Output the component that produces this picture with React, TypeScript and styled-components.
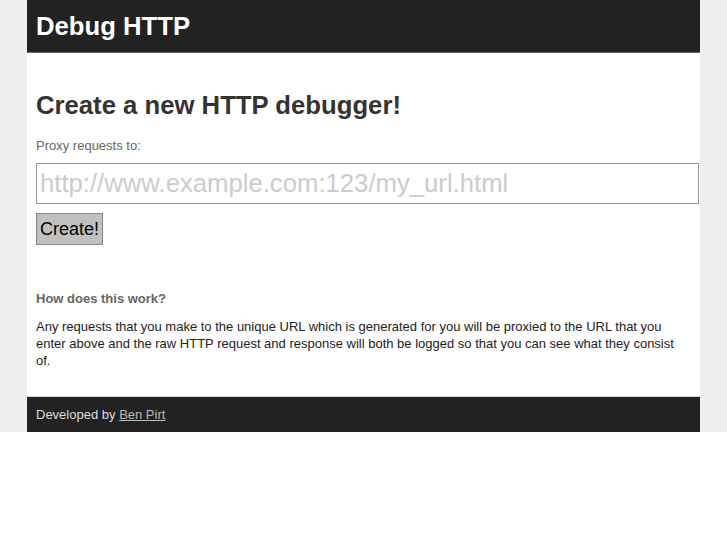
import React from 'react';
import styled, { createGlobalStyle } from 'styled-components';

const GlobalStyle = createGlobalStyle`
  html {
    background: #fff;
  }
  body {
    margin: 0;
    background: #eee;
    font-family: "Liberation Sans", Arial, sans-serif;
    font-size: 13px;
    color: #222;
  }
`;

const Page = styled.div`
  width: 673px;
  margin: 0 auto;
  background: #fff;
`;

const Header = styled.header`
  background: #222;
  height: 53px;
  border-bottom: 1px solid #666;
  box-sizing: border-box;
  padding: 0 9px;
  display: flex;
  align-items: center;
`;

const SiteTitle = styled.h1`
  margin: 0;
  font-size: 25.7px;
  font-weight: bold;
  color: #fff;
`;

const Main = styled.main`
  padding: 37px 9px 27px;
`;

const PageTitle = styled.h2`
  margin: 0 0 18px;
  font-size: 25.7px;
  font-weight: bold;
  color: #333;
  line-height: 30px;
`;

const FieldLabel = styled.label`
  display: block;
  color: #666;
  font-size: 13px;
  margin-bottom: 10px;
`;

const UrlInput = styled.input`
  display: block;
  width: 100%;
  padding: 3px 3px;
  height: 33px;
  border: 1px solid #999;
  font-family: "Liberation Sans", Arial, sans-serif;
  font-size: 25.7px;
  color: #333;
  outline: none;
  &::placeholder {
    color: #ccc;
  }
`;

const CreateButton = styled.button`
  margin-top: 9px;
  height: 32px;
  padding: 0 3px;
  background: #c0c0c0;
  border: 1px solid #888;
  font-family: "Liberation Sans", Arial, sans-serif;
  font-size: 18px;
  color: #000;
`;

const Section = styled.section`
  margin-top: 46px;
`;

const SectionTitle = styled.h3`
  margin: 0 0 12px;
  font-size: 13px;
  font-weight: bold;
  color: #666;
`;

const Text = styled.p`
  margin: 0;
  line-height: 17px;
  color: #222;
`;

const Footer = styled.footer`
  background: #222;
  border-top: 1px solid #ddd;
  height: 36px;
  box-sizing: border-box;
  padding: 0 9px;
  display: flex;
  align-items: center;
  color: #ddd;
`;

const FooterLink = styled.a`
  color: #bbb;
  text-decoration: underline;
`;

export default function App() {
  return (
    <>
      <GlobalStyle />
      <Page>
        <Header>
          <SiteTitle>Debug HTTP</SiteTitle>
        </Header>
        <Main>
          <PageTitle>Create a new HTTP debugger!</PageTitle>
          <FieldLabel htmlFor="url">Proxy requests to:</FieldLabel>
          <UrlInput id="url" placeholder="http://www.example.com:123/my_url.html" />
          <CreateButton>Create!</CreateButton>
          <Section>
            <SectionTitle>How does this work?</SectionTitle>
            <Text>
              Any requests that you make to the unique URL which is generated for you will be proxied to the URL that you
              enter above and the raw HTTP request and response will both be logged so that you can see what they consist
              of.
            </Text>
          </Section>
        </Main>
        <Footer>
          Developed by&nbsp;<FooterLink href="#">Ben Pirt</FooterLink>
        </Footer>
      </Page>
    </>
  );
}
